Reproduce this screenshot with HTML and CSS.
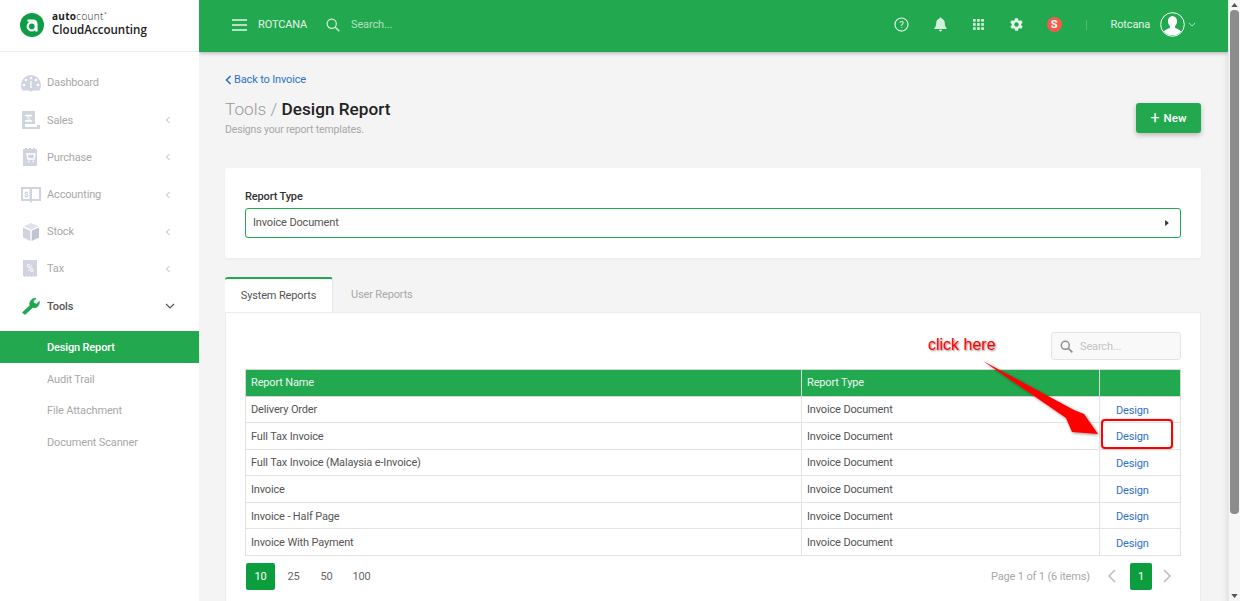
FILE: index.html
```html
<!DOCTYPE html>
<html lang="en">
<head>
<meta charset="utf-8">
<title>Design Report</title>
<link rel="stylesheet" href="styles.css">
</head>
<body>
<div class="app">
  <aside class="sidebar">
    <div class="brand">
      <svg class="brand-mark" viewBox="0 0 24 24"><circle cx="12" cy="12" r="12" fill="#0c9d46"/><circle cx="11.8" cy="13.4" r="4" fill="none" stroke="#fff" stroke-width="2.4"/><path d="M7.5 7.6h5.2q3.7 0 3.7 3.6v7.2" fill="none" stroke="#fff" stroke-width="2.4"/></svg>
      <div class="brand-text">
        <div class="brand-top"><b>auto</b>count<sup>*</sup></div>
        <div class="brand-name">CloudAccounting</div>
      </div>
    </div>
    <nav class="nav">
      <div class="nav-item">
        <svg class="nav-icon" viewBox="0 0 20 16"><path d="M10 0a10 10 0 0 0-10 10c0 2 .6 4 1.6 5.5h6.6a2 2 0 0 0 3.6 0h6.6A10 10 0 0 0 20 10 10 10 0 0 0 10 0z" fill="#cfd4de"/><g fill="#fff"><circle cx="10" cy="3" r="1.3"/><circle cx="5" cy="5" r="1.3"/><circle cx="15" cy="5" r="1.3"/><circle cx="3" cy="10" r="1.3"/><circle cx="17" cy="10" r="1.3"/><rect x="9.4" y="6" width="1.2" height="7"/></g></svg>
        <span class="nav-label">Dashboard</span>
      </div>
      <div class="nav-item">
        <svg class="nav-icon" viewBox="0 0 20 18"><path d="M1 0h13v13H4v3h12v-2h3v4H1z" fill="#cfd4de"/><path d="M4 4.500h7M4 10h7" stroke="#fff" stroke-width="1.400"/><text x="7.500" y="9.500" font-size="7" text-anchor="middle" fill="#fff" font-family="Roboto, sans-serif">$</text></svg>
        <span class="nav-label">Sales</span>
        <svg class="chev" viewBox="0 0 8 10"><path d="M6 1 2 5l4 4" fill="none" stroke="#a5a8ad" stroke-width="1.100"/></svg>
      </div>
      <div class="nav-item">
        <svg class="nav-icon" viewBox="0 0 20 18"><path d="M2 1h2V0h2v1h2V0h2v1h2V0h2v1h2v17H2z" fill="#cfd4de"/><path d="M6 6h8l-1 5H7zM7 13.500h1.500M11.500 13.500H13" stroke="#fff" stroke-width="1.500" fill="none"/></svg>
        <span class="nav-label">Purchase</span>
        <svg class="chev" viewBox="0 0 8 10"><path d="M6 1 2 5l4 4" fill="none" stroke="#a5a8ad" stroke-width="1.100"/></svg>
      </div>
      <div class="nav-item">
        <svg class="nav-icon" viewBox="0 0 20 16"><path d="M0 0h20v14h-9v1.500H9V14H0z" fill="#cfd4de"/><path d="M2 2h6.500v10H2zM11 2h7v10h-7z" fill="#fff"/><text x="5.200" y="9.500" font-size="8" text-anchor="middle" fill="#b8bdc8" font-family="Roboto, sans-serif">$</text></svg>
        <span class="nav-label">Accounting</span>
        <svg class="chev" viewBox="0 0 8 10"><path d="M6 1 2 5l4 4" fill="none" stroke="#a5a8ad" stroke-width="1.100"/></svg>
      </div>
      <div class="nav-item">
        <svg class="nav-icon" viewBox="0 0 20 18"><path d="M10 0l7.500 3.200L10 6.500 2.500 3.200z" fill="#dfe2e8"/><path d="M2 4.500l7.300 3.200V18L2 14.500z" fill="#cfd4de"/><path d="M18 4.500l-7.300 3.200V18l7.300-3.500z" fill="#bfc5d1"/></svg>
        <span class="nav-label">Stock</span>
        <svg class="chev" viewBox="0 0 8 10"><path d="M6 1 2 5l4 4" fill="none" stroke="#a5a8ad" stroke-width="1.100"/></svg>
      </div>
      <div class="nav-item">
        <svg class="nav-icon" viewBox="0 0 20 18"><path d="M2 0h14v16l-1.750 1-1.750-1-1.750 1L9 16l-1.750 1-1.750-1-1.750 1L2 16z" fill="#cfd4de"/><text x="9" y="12" font-size="10" text-anchor="middle" fill="#fff" font-family="Roboto, sans-serif">%</text></svg>
        <span class="nav-label">Tax</span>
        <svg class="chev" viewBox="0 0 8 10"><path d="M6 1 2 5l4 4" fill="none" stroke="#a5a8ad" stroke-width="1.100"/></svg>
      </div>
      <div class="nav-item nav-open">
        <svg class="nav-icon" viewBox="0 0 20 18"><path d="M1.500 15.500 9 8.500C8 5 10.500 1 15 1.200l-2.700 3 .8 2.300 2.400.6 2.800-2.700C18.500 9 15 11.500 11.500 10.500l-7.500 7z" fill="#1da84d" stroke="#1da84d" stroke-width=".8"/></svg>
        <span class="nav-label">Tools</span>
        <svg class="chev-down" viewBox="0 0 10 8"><path d="M1 2l4 4 4-4" fill="none" stroke="#555" stroke-width="1.200"/></svg>
      </div>
    </nav>
    <ul class="subnav">
      <li class="sub-active">Design Report</li>
      <li>Audit Trail</li>
      <li>File Attachment</li>
      <li>Document Scanner</li>
    </ul>
  </aside>

  <div class="main">
    <header class="topbar">
      <svg class="burger" viewBox="0 0 15 12"><path d="M0 1h15M0 6h15M0 11h15" stroke="#e3f5e9" stroke-width="1.700"/></svg>
      <span class="org">ROTCANA</span>
      <svg class="top-search" viewBox="0 0 14 14"><circle cx="5.700" cy="5.700" r="4.600" fill="none" stroke="#d5efdd" stroke-width="1.200"/><path d="M9 9l4.300 4.300" stroke="#d5efdd" stroke-width="1.400"/></svg>
      <span class="top-placeholder">Search...</span>
      <div class="top-actions">
        <svg class="ti" viewBox="0 0 14 14"><circle cx="7" cy="7" r="6.100" fill="none" stroke="#e3f5e9" stroke-width="1.100"/><text x="7" y="10" font-size="9" text-anchor="middle" fill="#e3f5e9" font-family="Roboto, sans-serif">?</text></svg>
        <svg class="ti ti-bell" viewBox="0 0 14 14"><path d="M7 .5c.6 0 1 .4 1 1 2 .5 3 2.200 3 4.200 0 2.300.7 3.600 1.800 4.800v.8H1.200v-.8C2.300 9.300 3 8 3 5.700c0-2 1-3.700 3-4.200 0-.6.400-1 1-1zM5.500 12h3a1.500 1.500 0 0 1-3 0z" fill="#d5efdd"/></svg>
        <svg class="ti ti-apps" viewBox="0 0 11 11"><g fill="#d5efdd"><rect width="2.700" height="2.700"/><rect x="4.100" width="2.700" height="2.700"/><rect x="8.200" width="2.700" height="2.700"/><rect y="4.100" width="2.700" height="2.700"/><rect x="4.100" y="4.100" width="2.700" height="2.700"/><rect x="8.200" y="4.100" width="2.700" height="2.700"/><rect y="8.200" width="2.700" height="2.700"/><rect x="4.100" y="8.200" width="2.700" height="2.700"/><rect x="8.200" y="8.200" width="2.700" height="2.700"/></g></svg>
        <svg class="ti ti-gear" viewBox="0 0 24 24"><path fill="#e3f5e9" d="M19.400 13a7.500 7.500 0 0 0 0-2l2.100-1.600a.5.5 0 0 0 .1-.6l-2-3.500a.5.5 0 0 0-.6-.2l-2.500 1a7.300 7.300 0 0 0-1.700-1l-.4-2.600a.5.5 0 0 0-.5-.4h-4a.5.5 0 0 0-.5.4l-.4 2.600a7.300 7.300 0 0 0-1.700 1l-2.500-1a.5.5 0 0 0-.6.2l-2 3.500a.5.5 0 0 0 .1.600L4.600 11a7.500 7.500 0 0 0 0 2l-2.100 1.600a.5.5 0 0 0-.1.600l2 3.500c.1.200.4.300.6.200l2.500-1a7.300 7.300 0 0 0 1.700 1l.4 2.600c0 .2.200.4.500.4h4c.3 0 .5-.2.500-.4l.4-2.600a7.300 7.300 0 0 0 1.700-1l2.500 1c.2.100.5 0 .6-.2l2-3.500a.5.5 0 0 0-.1-.6zM12 15.500a3.500 3.500 0 1 1 0-7 3.500 3.500 0 0 1 0 7z"/></svg>
        <span class="s-badge">S</span>
        <span class="top-sep"></span>
        <span class="user">Rotcana</span>
        <svg class="avatar" viewBox="0 0 26 26"><circle cx="13" cy="13" r="12.300" fill="#22a94f" stroke="#fff" stroke-width="1"/><path d="M13 4.500c3 0 4.700 2.300 4.700 5.200 0 2-.8 3.800-2 4.800v1.700c0 .8 4.500 2 6.300 4a12 12 0 0 1-18 0c1.800-2 6.300-3.200 6.300-4v-1.700c-1.200-1-2-2.800-2-4.800 0-2.900 1.700-5.200 4.700-5.200z" fill="#fff"/></svg>
        <svg class="user-chev" viewBox="0 0 10 6"><path d="M1 1l4 4 4-4" fill="none" stroke="#d5efdd" stroke-width="1"/></svg>
      </div>
    </header>

    <main class="content">
      <a class="back"><svg class="back-chev" viewBox="0 0 7 10"><path d="M5.500 1 1.500 5l4 4" fill="none" stroke="#2d72c7" stroke-width="1.600"/></svg>Back to Invoice</a>
      <div class="title-row">
        <div>
          <h1 class="title"><span class="crumb">Tools / </span>Design Report</h1>
          <p class="subtitle">Designs your report templates.</p>
        </div>
        <button class="btn-new"><span class="plus">+</span>New</button>
      </div>

      <section class="card type-card">
        <div class="field-label">Report Type</div>
        <div class="select">
          <span>Invoice Document</span>
          <svg class="caret" viewBox="0 0 5 8"><path d="M0 0l5 4-5 4z" fill="#333"/></svg>
        </div>
      </section>

      <div class="tabs">
        <div class="tab tab-active">System Reports</div>
        <div class="tab">User Reports</div>
      </div>
      <section class="card table-card">
        <div class="table-tools">
          <div class="search-box">
            <svg class="sb-icon" viewBox="0 0 14 14"><circle cx="5.700" cy="5.700" r="4.300" fill="none" stroke="#8f8f8f" stroke-width="1.600"/><path d="M9 9l4.300 4.300" stroke="#8f8f8f" stroke-width="1.800"/></svg>
            <span>Search...</span>
          </div>
        </div>
        <table class="grid">
          <thead>
            <tr><th class="c1">Report Name</th><th class="c2">Report Type</th><th class="c3"></th></tr>
          </thead>
          <tbody>
            <tr><td>Delivery Order</td><td>Invoice Document</td><td class="act"><a>Design</a></td></tr>
            <tr><td>Full Tax Invoice</td><td>Invoice Document</td><td class="act"><a>Design</a></td></tr>
            <tr><td>Full Tax Invoice (Malaysia e-Invoice)</td><td>Invoice Document</td><td class="act"><a>Design</a></td></tr>
            <tr><td>Invoice</td><td>Invoice Document</td><td class="act"><a>Design</a></td></tr>
            <tr><td>Invoice - Half Page</td><td>Invoice Document</td><td class="act"><a>Design</a></td></tr>
            <tr><td>Invoice With Payment</td><td>Invoice Document</td><td class="act"><a>Design</a></td></tr>
          </tbody>
        </table>
        <div class="pager">
          <div class="sizes">
            <span class="pg pg-on">10</span><span class="pg">25</span><span class="pg">50</span><span class="pg">100</span>
          </div>
          <div class="pages">
            <span class="info">Page 1 of 1 (6 items)</span>
            <svg class="arrow" viewBox="0 0 10 14"><path d="M8 1 2 7l6 6" fill="none" stroke="#bdbdbd" stroke-width="1.500"/></svg>
            <span class="pg-one">1</span>
            <svg class="arrow" viewBox="0 0 10 14"><path d="M2 1l6 6-6 6" fill="none" stroke="#bdbdbd" stroke-width="1.500"/></svg>
          </div>
        </div>
      </section>
    </main>
  </div>

  <div class="scrollbar">
    <svg class="sb-arrow" viewBox="0 0 8 5"><path d="M4 0l4 5H0z" fill="#555"/></svg>
    <div class="sb-thumb"></div>
    <svg class="sb-arrow" viewBox="0 0 8 5"><path d="M4 5l4-5H0z" fill="#555"/></svg>
  </div>
</div>

<div class="callout">click here</div>
<svg class="callout-arrow" viewBox="0 0 130 90"><defs><filter id="sh" x="-10%" y="-10%" width="130%" height="130%"><feDropShadow dx="1" dy="1" stdDeviation="1.500" flood-color="#000" flood-opacity=".45"/></filter></defs><path d="M1 1 92 50l10 4 14 20-26-2 -6-14z" fill="#f00" filter="url(#sh)"/></svg>
<div class="callout-box"></div>
</body>
</html>
```
FILE: styles.css
```css
* { box-sizing: border-box; }
html, body { margin: 0; height: 601px; overflow: hidden; }
body { font-family: Roboto, "Liberation Sans", sans-serif; font-size: 11px; letter-spacing: -.15px; color: #555; background: #f4f4f4; }

.app { display: flex; width: 1240px; height: 601px; }

/* Sidebar */
.sidebar { width: 199px; flex: none; background: #fff; height: 601px; }
.brand { height: 52px; display: flex; align-items: center; padding: 0 0 2px 20px; gap: 8px; border-bottom: 1px solid #ececec; }
.brand-mark { width: 24px; height: 24px; flex: none; }
.brand-text { display: flex; flex-direction: column; color: #222; margin-top: -1px; }
.brand-top { font-family: "Open Sans", sans-serif; font-size: 10px; line-height: 11px; font-weight: 300; letter-spacing: .3px; }
.brand-top b { font-weight: 700; }
.brand-top sup { font-size: 6px; line-height: 0; }
.brand-name { font-family: "Open Sans", sans-serif; font-size: 11.600px; line-height: 16px; font-weight: 600; letter-spacing: 0; }

.nav { padding-top: 12.400px; }
.nav-item { height: 37.200px; display: flex; align-items: center; padding-left: 21px; color: #a8a8a8; }
.nav-icon { width: 20px; height: 18px; flex: none; }
.nav-label { margin-left: 6px; flex: 1; }
.chev { width: 6px; height: 8px; margin-right: 28px; }
.nav-open { color: #555; font-weight: 500; }
.chev-down { width: 10px; height: 8px; margin-right: 24px; }

.subnav { list-style: none; margin: 6.600px 0 0; padding: 0; color: #a8a8a8; }
.subnav li { height: 31.600px; padding-left: 47px; display: flex; align-items: center; }
.subnav .sub-active { height: 32px; background: #22a94f; color: #fff; font-weight: 500; }

/* Main */
.main { width: 1029px; flex: none; height: 601px; overflow: hidden; display: flex; flex-direction: column; box-shadow: inset -6px 0 6px -6px #d5d5d5; }
.topbar { height: 52px; flex: none; background: #22a94f; display: flex; align-items: center; padding: 0 32px 3px 33px; color: #e3f5e9; box-shadow: 0 1px 4px rgba(0,0,0,.3); position: relative; }
.burger { width: 15px; height: 12px; flex: none; }
.org { margin-left: 11px; }
.top-search { width: 14px; height: 14px; margin-left: 19px; }
.top-placeholder { margin-left: 11px; color: #b5e0c4; }
.top-actions { margin-left: auto; display: flex; align-items: center; }
.ti { width: 15px; height: 15px; margin-right: 24px; flex: none; }
.ti-bell { margin-right: 25px; }
.ti-apps { width: 11px; height: 11px; margin-right: 25px; }
.ti-gear { margin-right: 23px; }
.s-badge { width: 15px; height: 15px; border-radius: 50%; background: #f65a4b; color: #fff; font-weight: 700; font-size: 11px; display: flex; align-items: center; justify-content: center; }
.top-sep { width: 1px; height: 10px; background: #4dbb72; margin: 0 24px; }
.avatar { width: 25px; height: 25px; margin-left: 10px; flex: none; }
.user-chev { width: 8px; height: 5px; margin-left: 3px; }

.content { padding: 21px 27px 0 26px; flex: 1; min-height: 0; }
.back { display: flex; align-items: center; color: #2d72c7; line-height: 14px; }
.back-chev { width: 7px; height: 10px; margin-right: 2px; }
.title-row { display: flex; justify-content: space-between; align-items: flex-start; margin-top: 11px; height: 70px; }
.title { margin: 0; font-size: 17.200px; line-height: 22px; font-weight: 500; color: #222; letter-spacing: 0; }
.crumb { font-weight: 300; color: #999; }
.subtitle { margin: 3px 0 0; font-size: 10.500px; line-height: 14px; color: #a8a8a8; }
.btn-new { margin-top: 5px; width: 65px; height: 30px; background: #22a94f; color: #fff; border: 0; border-radius: 3px; font: 500 11.500px Roboto, sans-serif; box-shadow: 0 2px 5px rgba(0,0,0,.25); display: flex; align-items: center; justify-content: center; }
.plus { font-size: 16px; font-weight: 400; margin-right: 4px; line-height: 16px; }

.card { background: #fff; }
.type-card { height: 90px; padding: 22px 20px 0; border-radius: 3px; box-shadow: 0 1px 3px rgba(0,0,0,.04); }
.field-label { font-weight: 500; color: #333; line-height: 14px; margin-bottom: 4px; }
.select { height: 30px; border: 1px solid #22a94f; border-radius: 3px; padding: 0 11px 1px 7px; display: flex; justify-content: space-between; align-items: center; color: #555; }
.caret { width: 4px; height: 6px; }

.tabs { display: flex; margin-top: 19px; height: 35px; }
.tab { padding: 0 18px; line-height: 35px; color: #a8a8a8; }
.tab-active { width: 108px; padding: 0; text-align: center; background: #fff; border-top: 2px solid #22a94f; border-radius: 3px 3px 0 0; color: #555; line-height: 34px; border-right: 1px solid #e6e6e6; }

.table-card { height: 300px; padding: 19px 19px 0; border: 1px solid #ececec; border-bottom: 0; }
.table-tools { display: flex; justify-content: flex-end; height: 36.500px; }
.search-box { width: 130px; height: 28px; border: 1px solid #e4e4e4; border-radius: 3px; background: #f9f9f9; display: flex; align-items: center; padding-left: 8px; gap: 7px; color: #c4c4c4; }
.sb-icon { width: 13px; height: 13px; }

.grid { width: 936px; border-collapse: collapse; table-layout: fixed; }
.grid th, .grid td { padding: 0 5px; text-align: left; font-weight: 400; }
.grid th { background: #22a94f; color: #eaf7ef; height: 27px; border: 1px solid #d8d8d8; }
.grid td { height: 26.600px; padding-top: 1px; border: 1px solid #e3e3e3; color: #555; }
.c1 { width: 556px; }
.c2 { width: 298px; }
.grid .act { padding: 2px 0 0 16px; color: #2d72c7; }

.pager { display: flex; justify-content: space-between; align-items: center; margin-top: 6.500px; padding: 0 9px 0 1px; }
.sizes { display: flex; align-items: center; }
.pg { height: 27px; min-width: 29px; margin-right: 4px; border-radius: 2px; display: flex; align-items: center; justify-content: center; color: #666; }
.pg:last-child { margin-left: 2px; }
.pg-on { background: #0c9d3e; color: #fff; }
.pages { display: flex; align-items: center; }
.info { color: #a8a8a8; margin-right: 17px; }
.arrow { width: 10px; height: 14px; }
.pg-one { width: 22px; height: 27px; background: #0c9d3e; color: #fff; border-radius: 2px; display: flex; align-items: center; justify-content: center; margin: 0 10px 0 13px; }

/* Scrollbar */
.scrollbar { width: 12px; flex: none; background: #f6f6f6; display: flex; flex-direction: column; align-items: center; justify-content: space-between; padding: 3px 0; border-left: 1px solid #e6e6e6; position: relative; }
.sb-arrow { width: 7px; height: 4px; flex: none; }
.sb-thumb { width: 9px; flex: 0 0 504px; background: #8c8c8c; border-radius: 4px; margin: 3px 0 auto; }

/* Annotation overlay */
.callout { position: absolute; left: 928px; top: 336px; font-family: "Liberation Sans", sans-serif; font-size: 16px; line-height: 18px; letter-spacing: 0; color: #f00; text-shadow: 1px 1px 2px rgba(0,0,0,.5), 0 0 1px #fff; }
.callout-arrow { position: absolute; left: 982px; top: 360px; width: 130px; height: 90px; }
.callout-box { position: absolute; left: 1101px; top: 419px; width: 72px; height: 30px; border: 2px solid #f00; border-radius: 4px; box-shadow: 0 0 2px rgba(0,0,0,.3); }
```
